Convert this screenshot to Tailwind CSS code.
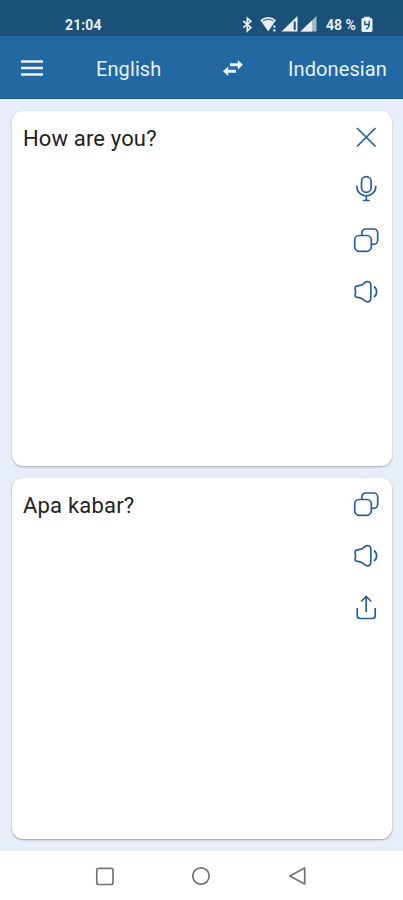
<!DOCTYPE html>
<html lang="en">
<head>
<meta charset="utf-8">
<title>Translator</title>
<script src="https://cdn.jsdelivr.net/npm/@tailwindcss/browser@4"></script>
</head>
<body class="bg-[#e7eef7] font-[Roboto,sans-serif]">
<svg class="hidden">
  <symbol id="copy" viewBox="0 0 28 28"><rect x="2.7" y="9.5" width="16.6" height="15.8" rx="4.500"/><path d="M9.800 9.300V7a4 4 0 0 1 4-4h7.900a4 4 0 0 1 4 4v7.300a4 4 0 0 1-4 4h-2.200"/></symbol>
  <symbol id="speaker" viewBox="0 0 28 28"><path d="M4.500 8.200L9 7.200C11 6.700 12 4.700 14 3.900c2.500-1 4.800.2 4.800 2.900v13.800c0 2.700-2.300 3.900-4.800 2.900-2-.8-3-2.800-5-3.300L4.500 19.200a1.800 1.800 0 0 1-1.400-2.300c.5-2 .5-4.400 0-6.400A1.800 1.800 0 0 1 4.500 8.200z"/><path d="M22 8.500c3.500 2.500 3.500 8 0 10.500"/></symbol>
</svg>
<div class="flex h-[900px] w-[403px] flex-col overflow-hidden">
  <div class="flex h-[36px] shrink-0 items-center bg-[#1b5078] pt-[13px] pl-[65px] text-[14px] leading-[14px] font-bold text-[#e8eff8]">
    <span class="w-[176px] tracking-[0.1px]">21:04</span>
    <svg class="h-[20px] w-[78px] shrink-0" viewBox="0 0 78 20" fill="none" stroke="#e8eff8">
      <path d="M2.300 6l7.500 6.500-3.500 3.500V3.300l3.500 3-7.500 6.400" stroke-width="1.700"/>
      <path d="M19.300 5.100Q27.200 -1.300 35 5.100L27.200 16.500z" fill="#e8eff8" stroke="none"/>
      <path d="M22 5.500q5.200-2.500 10.500 0" stroke="#1b5078" stroke-width="1"/>
      <path d="M33.400 10.500v2.300m0 1.400v2.300" stroke-width="2"/>
      <path d="M56.500 1v15.500H40.500z" fill="#e8eff8" stroke="none"/><path d="M53.700 6.500v8.500" stroke="#1b5078" stroke-width="2"/>
      <path d="M75.500 1v15.500H59.500z" fill="#aab9c7" stroke="none"/><path d="M71 5.500v11H59.500z" fill="#e8eff8" stroke="none"/>
    </svg>
    <span class="ml-[7px] w-[35px] text-[14px] font-bold whitespace-nowrap">48 %</span>
    <svg class="h-[18px] w-[12px] shrink-0" viewBox="0 0 12 18"><path d="M3 2V.8h6V2h1a1.500 1.500 0 0 1 1.500 1.500v11A1.500 1.500 0 0 1 10 16H2A1.500 1.500 0 0 1 .5 14.500v-11A1.500 1.500 0 0 1 2 2z" fill="#e8eff8"/><path d="M3.800 4.800v3.700h4.400V4.800M8.200 8q0 3.800-3 5" fill="none" stroke="#1b5078" stroke-width="1.300"/></svg>
  </div>
  <header class="flex h-[63px] shrink-0 items-center border-b border-[#195a90] bg-[#2268a2] pt-[1px] pl-[21px] text-[20px] text-[#e8f0fa]">
    <svg class="h-[16px] w-[22px]" viewBox="0 0 22 16" stroke="#eef4fb" stroke-width="2.300"><path d="M0 1.500h22M0 8h22M0 14.500h22"/></svg>
    <span class="ml-[53px] w-[127px] pt-[2px] tracking-[0.1px]">English</span>
    <svg class="h-[16px] w-[20px]" viewBox="0 0 20 16" fill="#eef4fb"><path d="M14.800 0L20 4.700l-5.200 4.700V6.200H7V3.200h7.800zM5.200 6.600L0 11.300 5.200 16v-3.200H13v-3H5.200z"/></svg>
    <span class="ml-[45px] pt-[2px] tracking-[0.1px]">Indonesian</span>
  </header>
  <main class="flex flex-1 flex-col gap-[12px] pt-[12px] pr-[11px] pb-[12px] pl-[12px]">
    <section class="flex h-[355px] justify-between rounded-[11px] bg-white pt-[12px] pr-[12px] pl-[11px] shadow-[0_1px_2px_rgba(70,90,100,0.45)]">
      <p class="pt-[2px] text-[22px] leading-[28px] tracking-[0.150px] text-[#222]">How are you?</p>
      <div class="flex flex-col gap-[23.700px] fill-none stroke-[#25609a] stroke-[1.700]">
        <svg class="size-[28px]" viewBox="0 0 28 28"><path d="M5 5l18.500 18.500M23.500 5L5 23.500"/></svg>
        <svg class="size-[28px]" viewBox="0 0 28 28"><rect x="9.500" y="1.700" width="9.600" height="15.600" rx="4.800"/><path d="M4.800 10.800v1a9.500 9 0 0 0 19 0v-1M14.300 20.800V25.500M10.800 25.500h7"/></svg>
        <svg class="size-[28px]"><use href="#copy"/></svg>
        <svg class="size-[28px]"><use href="#speaker"/></svg>
      </div>
    </section>
    <section class="flex flex-1 justify-between rounded-[11px] bg-white pt-[12px] pr-[12px] pl-[11px] shadow-[0_1px_2px_rgba(70,90,100,0.55)]">
      <p class="pt-[2px] text-[22px] leading-[28px] tracking-[0.200px] text-[#222]">Apa kabar?</p>
      <div class="flex flex-col gap-[23.700px] fill-none stroke-[#25609a] stroke-[1.700]">
        <svg class="size-[28px]"><use href="#copy"/></svg>
        <svg class="size-[28px]"><use href="#speaker"/></svg>
        <svg class="size-[28px]" viewBox="0 0 28 28"><path d="M14.200 19V4M9.200 8.500L14.200 3.500l5 5M5.200 15v7.500a3 3 0 0 0 3 3h12a3 3 0 0 0 3-3V15"/></svg>
      </div>
    </section>
  </main>
  <nav class="flex h-[49px] shrink-0 items-start justify-between bg-white pt-[15px] pr-[95px] pl-[95px]">
    <svg class="size-[20px]" viewBox="0 0 20 20" fill="none" stroke="#747474" stroke-width="1.700"><rect x="1.800" y="2.300" width="16.200" height="16.200" rx="2"/></svg>
    <svg class="size-[20px]" viewBox="0 0 20 20" fill="none" stroke="#747474" stroke-width="1.700"><circle cx="9" cy="10" r="8.200"/></svg>
    <svg class="size-[20px]" viewBox="0 0 20 20" fill="none" stroke="#747474" stroke-width="1.700" stroke-linejoin="round"><path d="M16.700 2v16L1.800 10z"/></svg>
  </nav>
</div>
</body>
</html>
